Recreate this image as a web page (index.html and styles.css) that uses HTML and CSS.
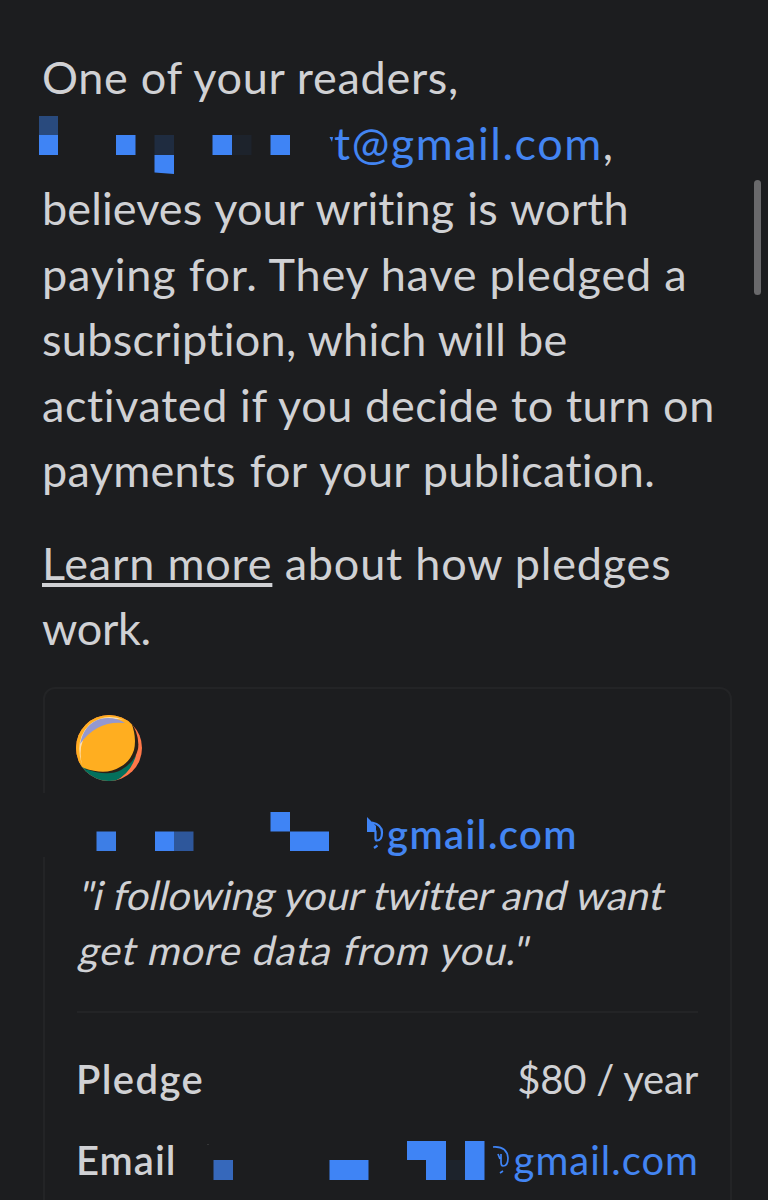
FILE: index.html
```
<!DOCTYPE html>
<html lang="en">

<head>
    <meta charset="utf-8">
    <title>New pledge</title>
    <link rel="stylesheet" href="styles.css">
</head>

<body>

<main class="mail">
    <p class="intro">
        <span class="line l1">One of your readers,</span>
        <span class="line address">
            <svg class="mask" width="297" height="60" viewBox="39 115 297 60" fill="#3f84f5">
                <path fill="#294a7d" d="M39 116h19v19H39z"/>
                <path d="M39 135h19v20H39zM116 135h19.500v20H116zM212.500 135h19.500v20h-19.500zM270.500 135H290v20h-19.500z"/>
                <path fill="#1f2c40" d="M154.500 135H174v20h-19.500z"/>
                <path d="M154.500 155H174v19l-19.500-1.500z"/>
                <path fill="#1d232c" d="M232 135h19.500v20H232z"/>
                <path d="M329.500 137h3.500l-1 5z"/>
            </svg>
            <a class="link mail-end">t@gmail.com</a>,
        </span>
        <span class="line l3">believes your writing is worth</span>
        <span class="line l4">paying for. They have pledged a</span>
        <span class="line l5">subscription, which will be</span>
        <span class="line l6">activated if you decide to turn on</span>
        <span class="line l7">payments for your publication.</span>
    </p>
    <p class="more">
        <span class="line l8"><a class="learn">Learn more</a> about how pledges</span>
        <span class="line l9">work.</span>
    </p>

    <section class="card">
        <svg class="avatar" width="66" height="66" viewBox="0 0 66 66">
            <defs><clipPath id="disc"><circle cx="33" cy="33" r="33"/></clipPath></defs>
            <g clip-path="url(#disc)">
                <path fill="#ff7849" d="M0 0h66v66H0z"/>
                <path fill="#04705c" d="M0 48L57 42Q61 40 61 37Q56 58 39 66H0z"/>
                <path fill="#2a2119" d="M54 5Q64 20 62 34Q59 47 45 55Q32 62 9 54z"/>
                <path fill="#ffae20" d="M0 0H48L55 7Q61 22 58 35Q54 47 44 52Q30 61 8 53L0 48z"/>
                <path fill="#ffdfae" d="M6 50Q-2 25 13 10Q29-3 48 5Q28 1 14 14Q1 28 6 50z"/>
                <path fill="#9498cf" d="M4 29Q8 9 24 4Q38 1 49 8Q21 5 4 29z"/>
            </g>
        </svg>
        <div class="row who">
            <svg class="mask" width="310" height="40" viewBox="77 812 310 40" fill="#3f84f5">
                <path fill="#3d7ee6" d="M96.500 831.500H116V851H96.500z"/>
                <path d="M155 831.500h19V851h-19zM270.500 812H290v19.500h-19.500zM290 831.500h39V851h-39z"/>
                <path fill="#2e579b" d="M174 831.500h19.500V851H174z"/>
                <path d="M367 817l9 9v6h-9z"/>
                <path fill="none" stroke="#3f84f5" stroke-width="2.200" d="M372 822.500q10 2 10 10 0 8-5 8-1.500 0-1.500-2v-8M377.500 845.500l-3.500 2.500"/>
            </svg>
            <a class="link strong">gmail.com</a>
        </div>
        <p class="quote">
            <span class="q1">"i following your twitter and want</span>
            <span class="q2">get more data from you."</span>
        </p>
        <div class="row pledge">
            <strong class="k1">Pledge</strong>
            <span class="price">$80 / year</span>
        </div>
        <div class="row email">
            <strong class="k2">Email</strong>
            <svg class="mask" width="306" height="40" viewBox="206 1141 306 40" fill="#3f84f5">
                <path fill="#3668bb" d="M212.500 1160H232v20h-19.500z"/>
                <path d="M328.500 1160h39v20h-39zM406 1141h39v39h-20v-20h-19zM464 1141h19.500v39H464z"/>
                <path fill="#1d232c" d="M445 1160h19v20h-19z"/>
                <path fill="#353637" d="M206 1144h2v1h-2z"/>
                <path fill="none" stroke="#3f84f5" stroke-width="1.700" d="M492 1147q14-1 15 11 0 8-5 8-2 0-2-4v-8M497 1154l2 5M502 1171l-3 2"/>
            </svg>
            <a class="link last">gmail.com</a>
        </div>
    </section>
</main>
<div class="scrollbar"></div>

</body>

</html>
```
FILE: styles.css
```
* {
    margin: 0;
    box-sizing: border-box;
}

body {
    height: 1200px;
    overflow: hidden;
    background: #1c1d1f;
    color: #d0d1d4;
    font-family: Lato, "Open Sans", sans-serif;
    font-size: 45px;
    line-height: 65.5px;
    font-variant-ligatures: none;
}

.mail {
    padding: 45px 36px 0 42px;
}

.line {
    display: block;
    white-space: nowrap;
}

.l1 { letter-spacing: 0.7px; }
.l3 { letter-spacing: 0.1px; word-spacing: 1.5px; }
.l4 { letter-spacing: 0.8px; }
.l5 { letter-spacing: 0.3px; }
.l6 { letter-spacing: 0.6px; }
.l7 { letter-spacing: 0.3px; word-spacing: 2px; }
.l8 { letter-spacing: 0.8px; }
.l9 { letter-spacing: -0.3px; }

.address {
    display: flex;
    height: 65.5px;
}

.mask {
    flex: none;
    overflow: visible;
}

.address .mask {
    margin: 4px 0 0 -3px;
}

.link {
    color: #4385f2;
}

.mail-end {
    margin-left: -2px;
    letter-spacing: 1.5px;
}

.more {
    margin-top: 27px;
}

.learn {
    text-decoration: underline;
    text-decoration-thickness: 4px;
    text-underline-offset: 3px;
    text-decoration-skip-ink: none;
}

.card {
    position: relative;
    height: 560px;
    margin: 25px 0 0 1px;
    padding: 26px 32px 0;
    border: 2px solid #232426;
    border-radius: 12px;
    font-size: 40px;
    line-height: 55px;
}

.card::before {
    content: "";
    position: absolute;
    left: -3px;
    top: 104px;
    width: 4px;
    height: 64px;
    background: #1c1d1f;
}

.avatar {
    display: block;
    margin-left: -1px;
}

.row {
    display: flex;
    align-items: center;
    height: 55px;
    white-space: nowrap;
}

.who {
    margin-top: 26px;
}

.who .mask {
    margin-top: -4px;
}

.strong,
.row strong {
    font-weight: 600;
}

.strong {
    letter-spacing: 1.4px;
}

.quote {
    margin-top: 6px;
    padding-bottom: 33px;
    border-bottom: 2px solid #232426;
    white-space: nowrap;
}

.quote span {
    display: block;
    padding-left: 3px;
    transform: skewX(-13deg);
}

.q2 { letter-spacing: 0.8px; }

.pledge {
    justify-content: space-between;
    margin-top: 39px;
}

.row strong {
    margin-left: -1px;
}

.k1 { letter-spacing: 1.4px; }
.k2 { letter-spacing: 1px; }

.price {
    letter-spacing: -0.2px;
}

.email {
    margin-top: 26px;
}

.email .mask {
    margin: 2px 1px 0 auto;
}

.last {
    letter-spacing: 1px;
    margin-right: -1px;
}

.scrollbar {
    position: fixed;
    top: 180px;
    right: 7px;
    width: 7px;
    height: 115px;
    border-radius: 4px;
    background: #69696b;
}
```
